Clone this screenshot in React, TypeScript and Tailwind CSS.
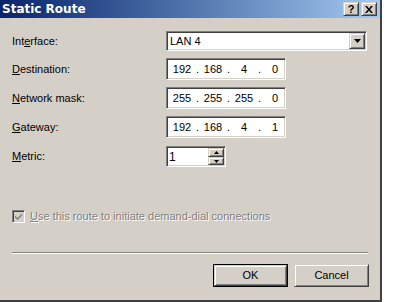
import { ReactNode } from 'react'

const sunken =
  'border border-t-[#808080] border-l-[#808080] border-b-white border-r-white shadow-[inset_1px_1px_0_#404040,inset_-1px_-1px_0_#d4d0c8]'
const raised =
  'border border-t-[#d4d0c8] border-l-[#d4d0c8] border-b-[#404040] border-r-[#404040] shadow-[inset_1px_1px_0_#ffffff,inset_-1px_-1px_0_#808080]'

const IpBox = ({ parts }: { parts: string[] }) => (
  <div className={`flex h-[22px] w-[120px] items-center bg-white pl-[3px] ${sunken}`}>
    {parts.map((p, i) => (
      <div key={i} className="flex items-center">
        <span className="w-[24px] text-center">{p}</span>
        {i < 3 && <span className="w-[7px] text-center">.</span>}
      </div>
    ))}
  </div>
)

const Row = ({ label, children }: { label: ReactNode; children: ReactNode }) => (
  <div className="flex items-center">
    <div className="w-[154px]">{label}</div>
    {children}
  </div>
)

const Arrow = ({ up, size = 7 }: { up?: boolean; size?: number }) => {
  const h = Math.ceil(size / 2)
  return (
    <svg width={size} height={h} viewBox={`0 0 ${size} ${h}`}>
      <polygon
        points={up ? `${size / 2},0 ${size},${h} 0,${h}` : `0,0 ${size},0 ${size / 2},${h}`}
        fill="#000"
      />
    </svg>
  )
}

export default function App() {
  return (
    <div className="h-[302px] w-[400px] bg-white text-[11px] text-black [font-family:'Liberation_Sans',Arial,sans-serif]">
      <div className="flex h-[302px] w-[382px] flex-col border-b-2 border-r-2 border-b-[#404040] border-r-[#404040] bg-[#d4d0c8]">
        {/* title bar */}
        <div className="flex h-[18px] items-center justify-between bg-gradient-to-r from-[#0a246a] to-[#a6caf0] pl-[2px] pr-[3px]">
          <span className="text-[12px] font-bold text-white [font-family:'DejaVu_Sans',sans-serif]">
            Static Route
          </span>
          <div className="flex gap-[2px]">
            <div className={`flex h-[14px] w-[16px] items-center justify-center bg-[#d4d0c8] text-[11px] font-bold leading-none ${raised}`}>
              ?
            </div>
            <div className={`flex h-[14px] w-[16px] items-center justify-center bg-[#d4d0c8] ${raised}`}>
              <svg width="8" height="7" viewBox="0 0 8 7">
                <path d="M0 0h2l2 2.5L6 0h2L5 3.5 8 7H6L4 4.5 2 7H0l3-3.5z" fill="#000" />
              </svg>
            </div>
          </div>
        </div>

        {/* form */}
        <div className="flex flex-col gap-[7px] pl-3 pt-[13px]">
          <Row label={<>Int<u>e</u>rface:</>}>
            <div className={`flex h-[20px] w-[201px] items-center justify-between bg-white pl-[3px] pr-[1px] ${sunken}`}>
              <span>LAN 4</span>
              <div className={`flex h-[16px] w-[16px] items-center justify-center bg-[#d4d0c8] ${raised}`}>
                <Arrow />
              </div>
            </div>
          </Row>
          <Row label={<><u>D</u>estination:</>}>
            <IpBox parts={['192', '168', '4', '0']} />
          </Row>
          <Row label={<><u>N</u>etwork mask:</>}>
            <IpBox parts={['255', '255', '255', '0']} />
          </Row>
          <Row label={<><u>G</u>ateway:</>}>
            <IpBox parts={['192', '168', '4', '1']} />
          </Row>
          <div className="mt-[1px]">
            <Row label={<><u>M</u>etric:</>}>
              <div className={`flex h-[21px] w-[60px] items-center justify-between bg-white pl-[2px] pr-[1px] ${sunken}`}>
                <span className="text-[12px]">1</span>
                <div className="flex flex-col">
                  <div className={`flex h-[9px] w-[16px] items-center justify-center bg-[#d4d0c8] ${raised}`}>
                    <Arrow up size={5} />
                  </div>
                  <div className={`flex h-[8px] w-[16px] items-center justify-center bg-[#d4d0c8] ${raised}`}>
                    <Arrow size={5} />
                  </div>
                </div>
              </div>
            </Row>
          </div>
        </div>

        {/* demand-dial option */}
        <div className="mt-[41px] flex items-center gap-[5px] pl-3">
          <div className={`flex h-[13px] w-[13px] items-center justify-center bg-[#d4d0c8] ${sunken}`}>
            <svg width="7" height="7" viewBox="0 0 7 7">
              <path d="M0 2.5l2.5 2.5L7 0.5V2.5L2.5 7 0 4.5z" fill="#808080" />
            </svg>
          </div>
          <span className="text-[#808080] [text-shadow:1px_1px_0_#ffffff]">
            <u>U</u>se this route to initiate demand-dial connections
          </span>
        </div>

        <div className="ml-3 mr-3 mt-[27px] h-[2px] border-t border-b border-t-[#808080] border-b-white" />

        <div className="mt-[10px] flex justify-end gap-[6px] pr-[11px]">
          <div className="h-[23px] w-[75px] border border-black">
            <div className={`flex h-full w-full items-center justify-center bg-[#d4d0c8] ${raised}`}>OK</div>
          </div>
          <div className={`flex h-[23px] w-[75px] items-center justify-center bg-[#d4d0c8] ${raised}`}>Cancel</div>
        </div>
      </div>
    </div>
  )
}
